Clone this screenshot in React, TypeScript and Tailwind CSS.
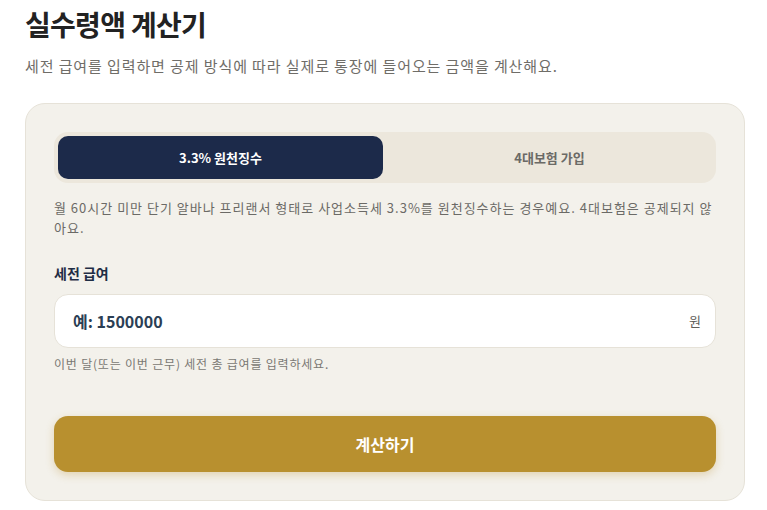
import React from 'react';

const font = { fontFamily: '"Noto Sans CJK KR", "Noto Sans", sans-serif' };

const App = () => {
  const [mode, setMode] = React.useState<'freelance' | 'insured'>('freelance');
  const [salary, setSalary] = React.useState('');

  return (
    <div className="min-h-screen bg-white px-[25px] pt-[7px] pb-4" style={font}>
      <h1 className="text-[28px] leading-[35px] font-bold text-[#222222] tracking-tight">실수령액 계산기</h1>
      <p className="mt-[13px] text-[15px] leading-[22px] tracking-[0.9px] text-[#6f6d68]">
        세전 급여를 입력하면 공제 방식에 따라 실제로 통장에 들어오는 금액을 계산해요.
      </p>

      {/* Calculator card */}
      <div className="mt-[26px] w-[720px] rounded-[20px] border border-[#e6e2d8] bg-[#f3f1eb] p-[28px]">
        <div className="flex h-[51px] gap-1 rounded-[14px] bg-[#ece7dc] p-[4px]">
          <button
            onClick={() => setMode('freelance')}
            className={`flex-1 rounded-[10px] text-[13px] font-bold ${
              mode === 'freelance' ? 'bg-[#1c2a4a] text-white' : 'text-[#6b6a66]'
            }`}
          >
            3.3% 원천징수
          </button>
          <button
            onClick={() => setMode('insured')}
            className={`flex-1 rounded-[10px] text-[13px] font-bold ${
              mode === 'insured' ? 'bg-[#1c2a4a] text-white' : 'text-[#6b6a66]'
            }`}
          >
            4대보험 가입
          </button>
        </div>

        <p className="mt-[15px] text-[13px] leading-[20px] tracking-[1px] text-[#6b6a66]">
          월 60시간 미만 단기 알바나 프리랜서 형태로 사업소득세 3.3%를 원천징수하는 경우예요. 4대보험은 공제되지 않아요.
        </p>

        <label className="mt-[25px] block text-[14px] leading-[20px] font-bold text-[#1f2d45]">세전 급여</label>
        <div className="mt-[11px] flex h-[54px] items-center rounded-[14px] border border-[#e6e2d8] bg-white pl-[18px] pr-[14px]">
          <input
            value={salary}
            onChange={(e) => setSalary(e.target.value)}
            placeholder="예: 1500000"
            className="flex-1 bg-transparent text-[16px] font-bold text-[#2b3e54] outline-none placeholder:text-[#2b3e54]"
          />
          <span className="text-[13px] text-[#5f5e5a]">원</span>
        </div>
        <p className="mt-[7px] text-[12px] leading-[18px] tracking-[0.8px] text-[#7a7873]">
          이번 달(또는 이번 근무) 세전 총 급여를 입력하세요.
        </p>

        <button className="mt-[43px] h-[56px] w-full rounded-[14px] bg-[#b8902f] text-[16px] font-bold text-white shadow-[0_3px_8px_rgba(184,144,47,0.3)]">
          계산하기
        </button>
      </div>
    </div>
  );
};

export default App;
